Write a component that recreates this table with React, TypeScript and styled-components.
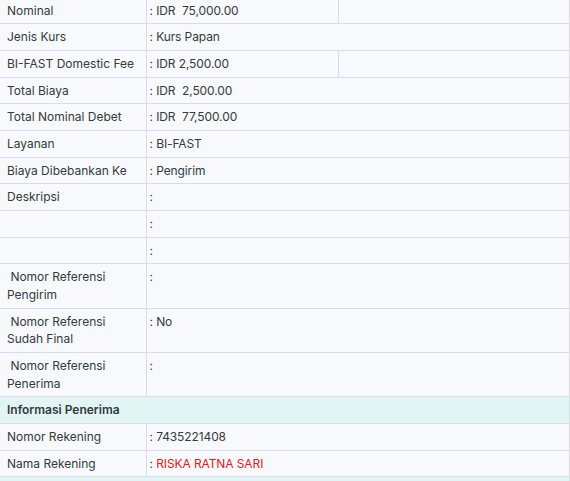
import React from "react";
import styled, { createGlobalStyle } from "styled-components";

const Global = createGlobalStyle`
  html, body { margin: 0; padding: 0; background: #f7f9fc; }
  body { font-family: Inter, "Noto Sans", sans-serif; overflow: hidden; }
`;

const Wrap = styled.div`
  margin-top: -3.5px;
  width: 100%;
`;

const Table = styled.table`
  width: 100%;
  border-collapse: collapse;
  table-layout: fixed;
  font-size: 12px;
  color: #333a40;
`;

const Row = styled.tr<{ $section?: boolean }>`
  background: ${(p) => (p.$section ? "#e1f5f4" : "#f7f9fc")};
`;

const Cell = styled.td<{ $bold?: boolean }>`
  border: 1px solid #d9dee4;
  border-left: none;
  padding: 4px 3px 4px 7px;
  line-height: 17.67px;
  vertical-align: top;
  white-space: pre-wrap;
  font-weight: ${(p) => (p.$bold ? 600 : 400)};
`;

const ValueCell = styled(Cell)`
  padding-left: 3px;
  letter-spacing: -0.1px;
`;

const Red = styled.span`
  color: #e02020;
`;

type R = { label: string; value: string; split?: boolean; red?: boolean };

const rows: R[] = [
  { label: "Nominal", value: ": IDR  75,000.00", split: true },
  { label: "Jenis Kurs", value: ": Kurs Papan" },
  { label: "BI-FAST Domestic Fee", value: ": IDR 2,500.00", split: true },
  { label: "Total Biaya", value: ": IDR  2,500.00" },
  { label: "Total Nominal Debet", value: ": IDR  77,500.00" },
  { label: "Layanan", value: ": BI-FAST" },
  { label: "Biaya Dibebankan Ke", value: ": Pengirim" },
  { label: "Deskripsi", value: ":" },
  { label: "", value: ":" },
  { label: "", value: ":" },
  { label: " Nomor Referensi\nPengirim", value: ":" },
  { label: " Nomor Referensi\nSudah Final", value: ": No" },
  { label: " Nomor Referensi\nPenerima", value: ":" },
];

const rows2: R[] = [
  { label: "Nomor Rekening", value: ": 7435221408" },
  { label: "Nama Rekening", value: "RISKA RATNA SARI", red: true },
];

function DataRow({ r }: { r: R }) {
  return (
    <Row>
      <Cell>{r.label}</Cell>
      {r.split ? (
        <>
          <ValueCell>{r.value}</ValueCell>
          <ValueCell />
        </>
      ) : (
        <ValueCell colSpan={2}>
          {r.red ? (
            <>
              : <Red>{r.value}</Red>
            </>
          ) : (
            r.value
          )}
        </ValueCell>
      )}
    </Row>
  );
}

export default function App() {
  return (
    <Wrap>
      <Global />
      <Table>
        <colgroup>
          <col style={{ width: 146 }} />
          <col style={{ width: 192 }} />
          <col />
        </colgroup>
        <tbody>
          {rows.map((r, i) => (
            <DataRow key={i} r={r} />
          ))}
          <Row $section>
            <Cell $bold colSpan={3}>
              Informasi Penerima
            </Cell>
          </Row>
          {rows2.map((r, i) => (
            <DataRow key={i} r={r} />
          ))}
          <Row $section>
            <Cell colSpan={3}>&nbsp;</Cell>
          </Row>
        </tbody>
      </Table>
    </Wrap>
  );
}
